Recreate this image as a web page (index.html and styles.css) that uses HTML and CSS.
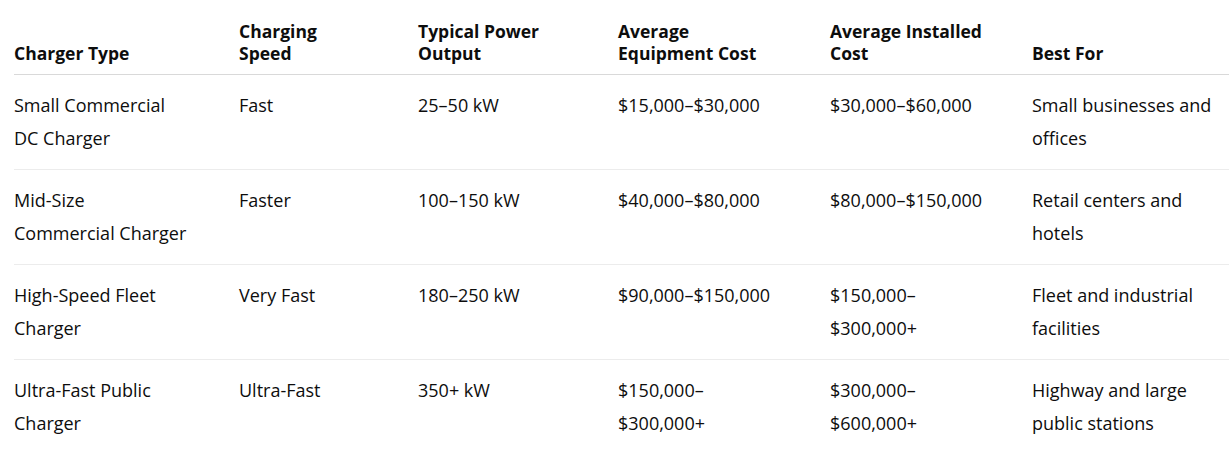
FILE: index.html
```html
<!DOCTYPE html>
<html lang="en">
<head>
<meta charset="utf-8">
<title>Commercial EV Charger Costs</title>
<link rel="stylesheet" href="styles.css">
</head>
<body>
<div class="wrap">
<table class="costs">
  <colgroup>
    <col class="c1"><col class="c2"><col class="c3"><col class="c4"><col class="c5"><col class="c6">
  </colgroup>
  <thead>
    <tr>
      <th>Charger Type</th>
      <th>Charging<br>Speed</th>
      <th>Typical Power<br>Output</th>
      <th>Average<br>Equipment Cost</th>
      <th>Average Installed<br>Cost</th>
      <th>Best For</th>
    </tr>
  </thead>
  <tbody>
    <tr>
      <td>Small Commercial<br>DC Charger</td>
      <td>Fast</td>
      <td>25–50 kW</td>
      <td>$15,000–$30,000</td>
      <td>$30,000–$60,000</td>
      <td>Small businesses and<br>offices</td>
    </tr>
    <tr>
      <td>Mid-Size<br>Commercial Charger</td>
      <td>Faster</td>
      <td>100–150 kW</td>
      <td>$40,000–$80,000</td>
      <td>$80,000–$150,000</td>
      <td>Retail centers and<br>hotels</td>
    </tr>
    <tr>
      <td>High-Speed Fleet<br>Charger</td>
      <td>Very Fast</td>
      <td>180–250 kW</td>
      <td>$90,000–$150,000</td>
      <td>$150,000–<br>$300,000+</td>
      <td>Fleet and industrial<br>facilities</td>
    </tr>
    <tr>
      <td>Ultra-Fast Public<br>Charger</td>
      <td>Ultra-Fast</td>
      <td>350+ kW</td>
      <td>$150,000–<br>$300,000+</td>
      <td>$300,000–<br>$600,000+</td>
      <td>Highway and large<br>public stations</td>
    </tr>
  </tbody>
</table>
</div>
</body>
</html>
```
FILE: styles.css
```css
html, body {
  margin: 0;
  padding: 0;
  background: #ffffff;
}
body {
  overflow: hidden;
  font-family: "Open Sans", "Noto Sans", sans-serif;
  color: #0d0d0d;
}
.wrap {
  padding: 8px 0 0 14px;
}
.costs {
  border-collapse: collapse;
  table-layout: fixed;
  width: 1218px;
}
.c1 { width: 225px; }
.c2 { width: 179px; }
.c3 { width: 200px; }
.c4 { width: 212px; }
.c5 { width: 202px; }
.c6 { width: 200px; }
.costs th {
  font-size: 17.5px;
  font-weight: 700;
  line-height: 22px;
  text-align: left;
  vertical-align: bottom;
  white-space: nowrap;
  padding: 12px 0 10px 0;
  border-bottom: 1px solid #d9d9d9;
}
.costs td {
  font-size: 18px;
  font-weight: 400;
  line-height: 33px;
  vertical-align: top;
  white-space: nowrap;
  padding: 14px 0 14px 0;
  border-bottom: 1px solid #ececec;
}
.costs tbody tr:last-child td {
  border-bottom: none;
}
```
